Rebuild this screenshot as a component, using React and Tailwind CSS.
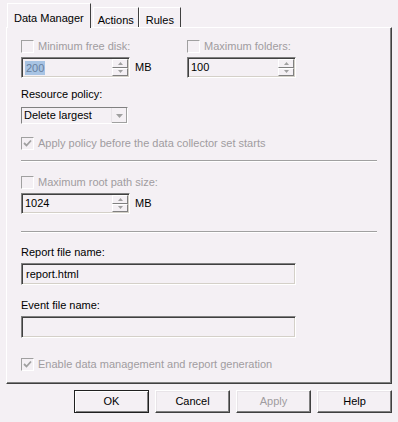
import { useState } from 'react'

const sunken = 'border border-t-[#808080] border-l-[#808080] border-r-white border-b-white shadow-[inset_1px_1px_#404040,inset_-1px_-1px_#d4d0c8]'
const raised = 'border border-t-white border-l-white border-r-[#404040] border-b-[#404040] shadow-[inset_-1px_-1px_#808080,inset_1px_1px_#e8e4e8]'

function Check({ checked, label, className = '' }) {
  return (
    <div className={`flex items-center h-[13px] ${className}`}>
      <span className={`w-[13px] h-[13px] flex items-center justify-center ${sunken} shadow-none border-t-[#a0a0a0] border-l-[#a0a0a0] border-r-[#e8e4e8] border-b-[#e8e4e8]`}>
        {checked && (
          <svg width="9" height="9" viewBox="0 0 9 9">
            <path d="M1 4 L3.5 6.5 L8 1.5" stroke="#a0a0a0" strokeWidth="1.8" fill="none" />
          </svg>
        )}
      </span>
      <span className="ml-[4px] text-[#a09ca0] leading-none">{label}</span>
    </div>
  )
}

function Arrow({ up }) {
  return (
    <svg width="5" height="3" viewBox="0 0 5 3">
      <path d={up ? 'M2.5 0 L5 3 L0 3 Z' : 'M0 0 L5 0 L2.5 3 Z'} fill="#a0a0a0" />
    </svg>
  )
}

function Spin({ value, width, selected }) {
  return (
    <div className={`h-[21px] flex items-stretch bg-[#f4f0f4] ${sunken}`} style={{ width }}>
      <div className="flex-1 flex items-center pl-[3px]">
        {selected ? (
          <span className="bg-[#a8c4e4] text-[#6880a0] px-[1px] leading-[14px]">{value}</span>
        ) : (
          <span className="text-black">{value}</span>
        )}
      </div>
      <div className="w-[17px] flex flex-col py-[1px] pr-[1px]">
        <div className={`flex-1 flex items-center justify-center ${raised} shadow-none border-r-[#808080] border-b-[#808080]`}>
          <Arrow up />
        </div>
        <div className={`flex-1 flex items-center justify-center ${raised} shadow-none border-r-[#808080] border-b-[#808080]`}>
          <Arrow />
        </div>
      </div>
    </div>
  )
}

function Separator({ className = '' }) {
  return <div className={`ml-[14px] w-[356px] border-t border-t-[#a0a0a0] border-b border-b-white ${className}`} />
}

export default function App() {
  const [tab] = useState('Data Manager')

  return (
    <div
      className="w-[398px] h-[422px] bg-[#f4f0f4] text-[11px] text-black overflow-hidden"
      style={{ fontFamily: '"Liberation Sans", Arial, sans-serif' }}
    >
      {/* Tabs */}
      <div className="flex items-end h-[27px] pl-[7px]">
        <div className="h-[25px] px-[6px] pt-[6px] border-t border-l border-t-white border-l-white border-r border-r-[#404040] bg-[#f4f0f4] relative z-10 -mb-px">
          {tab}
        </div>
        <div className="h-[20px] ml-[2px] px-[4px] pt-[4px] border-t border-l border-t-white border-l-white border-r border-r-[#404040]">
          Actions
        </div>
        <div className="h-[20px] px-[6px] pt-[4px] border-t border-l border-t-white border-l-white border-r border-r-[#404040]">
          Rules
        </div>
      </div>

      {/* Panel */}
      <div className="ml-[6px] w-[386px] h-[357px] border border-t-white border-l-white border-r-[#404040] border-b-[#404040] shadow-[inset_-1px_-1px_#808080]">
        <div className="flex mt-[12px] ml-[14px]">
          <div className="w-[166px]">
            <Check label="Minimum free disk:" />
            <div className="flex items-center mt-[4px]">
              <Spin value="200" width={109} selected />
              <span className="ml-[5px]">MB</span>
            </div>
          </div>
          <div>
            <Check label="Maximum folders:" />
            <div className="mt-[4px]">
              <Spin value="100" width={109} />
            </div>
          </div>
        </div>

        <div className="ml-[14px] mt-[10px] leading-[13px]">Resource policy:</div>
        <div className={`ml-[14px] mt-[6px] w-[107px] h-[17px] flex items-stretch ${sunken} border-r-[#e8e4e8] border-b-[#e8e4e8] shadow-none`}>
          <div className="flex-1 flex items-center pl-[2px] leading-none">Delete largest</div>
          <div className="w-[16px] flex items-center justify-center border-l border-l-[#e8e4e8] shadow-[inset_-1px_-1px_#a0a0a0]">
            <svg width="7" height="4" viewBox="0 0 7 4"><path d="M0 0 L7 0 L3.5 4 Z" fill="#a0a0a0" /></svg>
          </div>
        </div>
        <Check checked label="Apply policy before the data collector set starts" className="ml-[14px] mt-[13px]" />

        <Separator className="mt-[10px]" />

        <Check label="Maximum root path size:" className="ml-[14px] mt-[14px]" />
        <div className="flex items-center ml-[14px] mt-[4px]">
          <Spin value="1024" width={109} />
          <span className="ml-[5px]">MB</span>
        </div>

        <Separator className="mt-[17px]" />

        <div className="ml-[14px] mt-[13px] leading-[13px]">Report file name:</div>
        <div className={`ml-[14px] mt-[4px] w-[275px] h-[22px] flex items-center pl-[4px] ${sunken}`}>report.html</div>

        <div className="ml-[14px] mt-[14px] leading-[13px]">Event file name:</div>
        <div className={`ml-[14px] mt-[4px] w-[275px] h-[22px] ${sunken}`} />

        <Check checked label="Enable data management and report generation" className="ml-[14px] mt-[20px]" />
      </div>

      {/* Buttons */}
      <div className="flex justify-end gap-[6px] pr-[6px] mt-[6px]">
        <button className="w-[75px] h-[23px] border border-[#202020] shadow-[inset_1px_1px_white,inset_-1px_-1px_#808080]">OK</button>
        <button className={`w-[75px] h-[23px] ${raised}`}>Cancel</button>
        <button className={`w-[75px] h-[23px] text-[#a09ca0] ${raised}`}>Apply</button>
        <button className={`w-[75px] h-[23px] ${raised}`}>Help</button>
      </div>
    </div>
  )
}
